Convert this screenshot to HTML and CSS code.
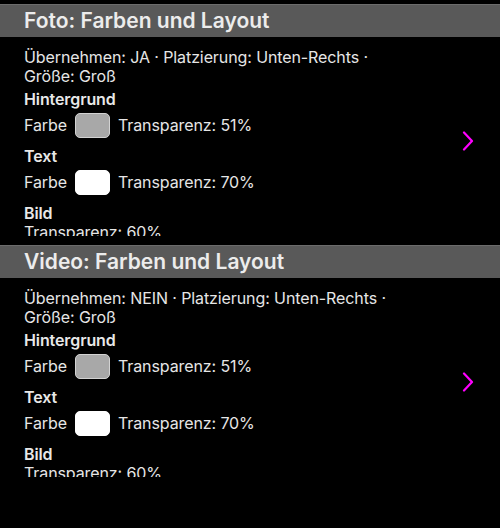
FILE: index.html
```html
<!DOCTYPE html>
<html lang="de">
<head>
<meta charset="utf-8">
<link rel="stylesheet" href="styles.css">
</head>
<body>
<div class="page">
  <section class="section first">
    <div class="header">Foto: Farben und Layout</div>
    <div class="cell">
      <div class="content">
        <div class="desc">Übernehmen: JA · Platzierung: Unten-Rechts ·<br>Größe: Groß</div>
        <div class="group">
          <div class="label">Hintergrund</div>
          <div class="row"><span>Farbe</span><span class="swatch gray"></span><span>Transparenz: 51%</span></div>
        </div>
        <div class="group">
          <div class="label">Text</div>
          <div class="row"><span>Farbe</span><span class="swatch white"></span><span>Transparenz: 70%</span></div>
        </div>
        <div class="group">
          <div class="label tight">Bild</div>
          <div class="line">Transparenz: 60%</div>
        </div>
      </div>
      <svg class="chevron" width="12" height="20" viewBox="0 0 12 20"><path d="M2 1.5 L10 10 L2 18.5" fill="none" stroke="#f0f" stroke-width="2.2" stroke-linecap="round" stroke-linejoin="round"/></svg>
    </div>
  </section>
  <section class="section">
    <div class="header">Video: Farben und Layout</div>
    <div class="cell">
      <div class="content">
        <div class="desc">Übernehmen: NEIN · Platzierung: Unten-Rechts ·<br>Größe: Groß</div>
        <div class="group">
          <div class="label">Hintergrund</div>
          <div class="row"><span>Farbe</span><span class="swatch gray"></span><span>Transparenz: 51%</span></div>
        </div>
        <div class="group">
          <div class="label">Text</div>
          <div class="row"><span>Farbe</span><span class="swatch white"></span><span>Transparenz: 70%</span></div>
        </div>
        <div class="group">
          <div class="label tight">Bild</div>
          <div class="line">Transparenz: 60%</div>
        </div>
      </div>
      <svg class="chevron" width="12" height="20" viewBox="0 0 12 20"><path d="M2 1.5 L10 10 L2 18.5" fill="none" stroke="#f0f" stroke-width="2.2" stroke-linecap="round" stroke-linejoin="round"/></svg>
    </div>
  </section>
</div>
</body>
</html>
```

FILE: styles.css
```css
html, body {
  margin: 0;
  padding: 0;
  background: #000;
}
body {
  width: 500px;
  height: 528px;
  overflow: hidden;
  font-family: Inter, "Noto Sans", "DejaVu Sans", sans-serif;
  color: #e6e6e6;
}
.page {
  padding-top: 4px;
}
.header {
  height: 33px;
  box-sizing: border-box;
  border-top: 1px solid #6c6c6c;
  background: #595959;
  color: #ececec;
  font-size: 21px;
  font-weight: 600;
  line-height: 32px;
  padding-left: 24px;
  letter-spacing: 0;
}
.cell {
  height: 208px;
  display: flex;
  align-items: center;
  padding-right: 26px;
}
.content {
  flex: 1;
  align-self: flex-start;
  height: 199px;
  overflow: hidden;
  box-sizing: border-box;
  padding: 11px 0 0 24px;
  font-size: 16px;
  line-height: 19px;
  letter-spacing: -0.1px;
}
.desc {
  color: #e6e6e6;
}
.group {
  margin-top: 4px;
}
.group + .group {
  margin-top: 9px;
}
.label {
  font-weight: 600;
  color: #e8e8e8;
  margin-bottom: 4px;
}
.label.tight {
  margin-bottom: 0;
}
.row {
  display: flex;
  align-items: center;
  gap: 8px;
  height: 25px;
}
.swatch {
  width: 35px;
  height: 25px;
  box-sizing: border-box;
  border-radius: 5px;
}
.swatch.gray {
  background: #a8a8a8;
  border: 1px solid #d2d2d2;
}
.swatch.white {
  background: #fff;
  border: 1px solid #fff;
}
.chevron {
  flex: none;
  display: block;
}
```
